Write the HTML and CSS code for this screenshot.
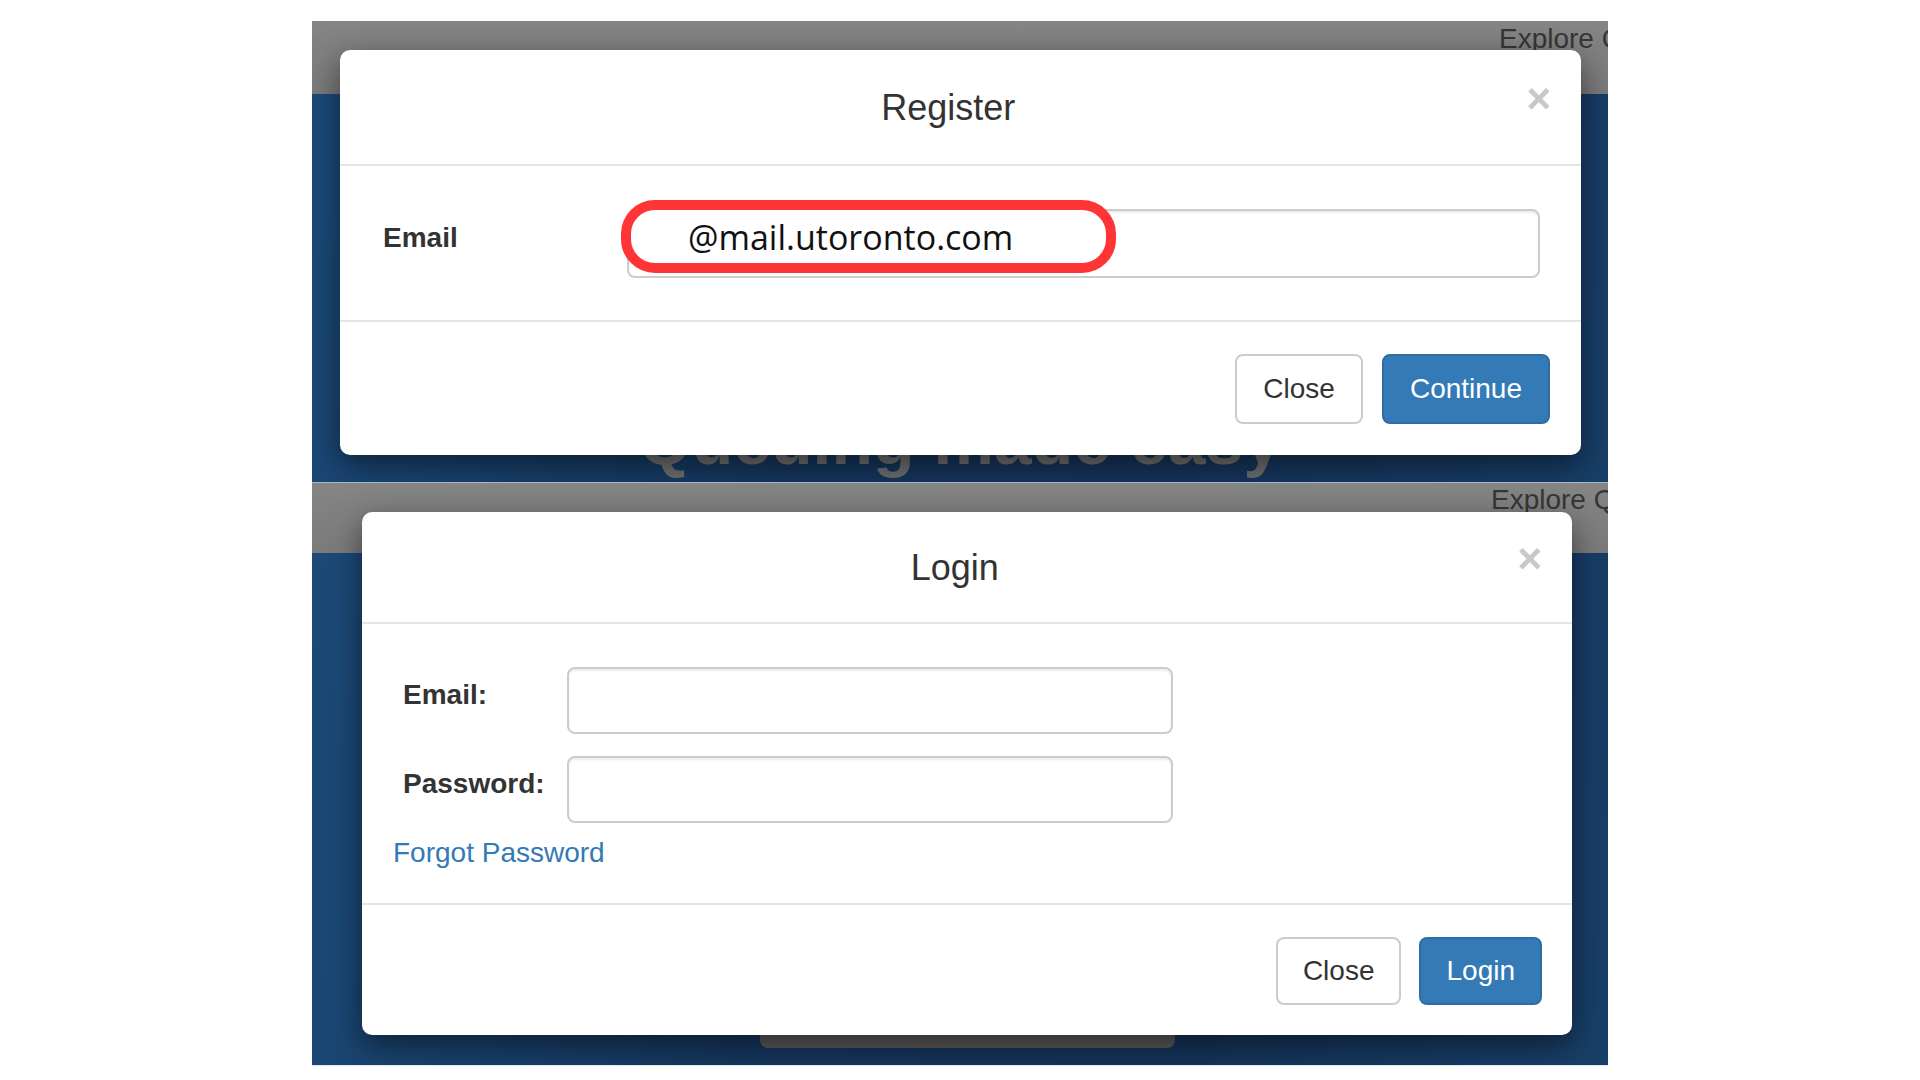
FILE: index.html
```html
<!DOCTYPE html>
<html lang="en">
<head>
<meta charset="utf-8">
<title>Register / Login</title>
<link rel="stylesheet" href="styles.css">
</head>
<body>
<div class="canvas">
  <section class="shot shot-register">
    <div class="nav"><span class="nav-link">Explore Queues</span></div>
    <div class="hero"><h1 class="hero-title">Queuing made easy</h1></div>
    <div class="modal modal-register">
      <div class="modal-header">
        <button class="close" type="button">&times;</button>
        <h4 class="modal-title">Register</h4>
      </div>
      <div class="modal-body">
        <div class="form-row">
          <label class="control-label">Email</label>
          <div class="form-control">
            <div class="annot">@mail.utoronto.com</div>
          </div>
        </div>
      </div>
      <div class="modal-footer">
        <button class="btn btn-default" type="button">Close</button>
        <button class="btn btn-primary" type="button">Continue</button>
      </div>
    </div>
  </section>
  <section class="shot shot-login">
    <div class="nav"><span class="nav-link">Explore Queues</span></div>
    <div class="hero"><div class="hero-button"></div></div>
    <div class="modal modal-login">
      <div class="modal-header">
        <button class="close" type="button">&times;</button>
        <h4 class="modal-title">Login</h4>
      </div>
      <div class="modal-body">
        <div class="form-row">
          <label class="control-label">Email:</label>
          <div class="form-control"></div>
        </div>
        <div class="form-row">
          <label class="control-label">Password:</label>
          <div class="form-control"></div>
        </div>
        <a class="forgot" href="#">Forgot Password</a>
      </div>
      <div class="modal-footer">
        <button class="btn btn-default" type="button">Close</button>
        <button class="btn btn-primary" type="button">Login</button>
      </div>
    </div>
  </section>
</div>
</body>
</html>
```
FILE: styles.css
```css
* { box-sizing: border-box; }

html, body {
  margin: 0;
  padding: 0;
  background: #ffffff;
  font-family: "Liberation Sans", Arial, Helvetica, sans-serif;
}

.canvas {
  width: 1296px;
  margin-left: 312px;
  padding-top: 21px;
}

.shot {
  position: relative;
  overflow: hidden;
  background: #17406b;
}

.shot-register {
  height: 461px;
}

.shot-login {
  height: 584px;
  border-top: 1px solid #a9b8c9;
  border-bottom: 1px solid #dfe6ee;
}

.nav {
  background: linear-gradient(to bottom, #858585, #7a7a7a);
  white-space: nowrap;
  overflow: hidden;
}

.shot-register .nav {
  height: 73px;
  padding: 4px 0 0 1187px;
}

.shot-login .nav {
  height: 70px;
  padding: 3px 0 0 1179px;
}

.nav-link {
  font-size: 28px;
  line-height: 28px;
  color: #363636;
}

.hero {
  background: linear-gradient(100deg, #1b4a78 0%, #15355c 40%, #15345a 70%, #183f69 100%);
}

.shot-register .hero {
  height: 388px;
  padding-top: 312px;
}

.hero-title {
  margin: 0;
  text-align: center;
  font-size: 68px;
  line-height: 68px;
  font-weight: 700;
  color: #6e6e6e;
  white-space: nowrap;
}

.shot-login .hero {
  height: 512px;
  display: flex;
  flex-direction: column;
  justify-content: flex-end;
  align-items: center;
  padding-bottom: 17px;
}

.hero-button {
  width: 415px;
  height: 48px;
  margin-left: 15px;
  background: #5a5a5a;
  border-radius: 8px;
}

/* modals (overlay the page screenshots) */
.modal {
  position: absolute;
  top: 29px;
  background: #ffffff;
  border-radius: 10px;
  box-shadow: 0 10px 30px rgba(0, 0, 0, 0.5);
}

.modal-register {
  left: 28px;
  width: 1241px;
}

.modal-login {
  left: 50px;
  width: 1210px;
}

.modal-header {
  padding: 32px 30px 31px;
  border-bottom: 2px solid #e5e5e5;
}

.modal-login .modal-header {
  padding: 30px 30px 29px;
}

.close {
  float: right;
  margin-top: -4px;
  padding: 0;
  border: 0;
  background: none;
  font-family: "Liberation Sans", Arial, sans-serif;
  font-size: 42px;
  font-weight: 700;
  line-height: 1;
  color: #c8c8c8;
  cursor: pointer;
}

.modal-title {
  margin: 0;
  text-align: center;
  font-size: 36px;
  line-height: 51px;
  font-weight: 400;
  color: #333333;
}

.modal-body {
  padding: 43px 41px 42px 43px;
}

.modal-login .modal-body {
  padding: 43px 41px 30px 41px;
}

.form-row {
  display: flex;
  align-items: flex-start;
}

.modal-login .form-row + .form-row {
  margin-top: 22px;
}

.control-label {
  flex: none;
  width: 244px;
  padding-top: 9px;
  font-size: 28px;
  line-height: 40px;
  font-weight: 700;
  color: #333333;
}

.modal-login .control-label {
  width: 164px;
  padding-top: 8px;
}

.form-control {
  position: relative;
  flex: 1;
  height: 69px;
  border: 2px solid #cccccc;
  border-radius: 8px;
  background: #ffffff;
  box-shadow: inset 0 2px 2px rgba(0, 0, 0, 0.075);
}

.modal-login .form-control {
  flex: none;
  width: 606px;
  height: 67px;
}

/* red annotation ring drawn over the input */
.annot {
  position: absolute;
  left: -8px;
  top: -11px;
  width: 495px;
  height: 73px;
  padding: 1px 0 0 57px;
  border: 10px solid #ff3535;
  border-radius: 34px;
  background: #ffffff;
  font-family: "Open Sans", "Noto Sans", sans-serif;
  font-size: 34px;
  line-height: 53px;
  color: #111111;
  white-space: nowrap;
}

.forgot {
  display: block;
  width: max-content;
  margin: 10px 0 0 -10px;
  font-size: 28px;
  line-height: 40px;
  color: #337ab7;
  text-decoration: none;
}

.modal-footer {
  display: flex;
  justify-content: flex-end;
  gap: 19px;
  padding: 32px 31px 31px;
  border-top: 2px solid #e5e5e5;
}

.modal-login .modal-footer {
  gap: 18px;
  padding: 32px 30px 30px;
}

.btn {
  display: flex;
  align-items: center;
  justify-content: center;
  height: 70px;
  padding: 0 26px;
  border: 2px solid;
  border-radius: 8px;
  font-family: "Liberation Sans", Arial, sans-serif;
  font-size: 28px;
  font-weight: 400;
  cursor: pointer;
}

.modal-login .btn {
  height: 68px;
  padding: 0 25px;
}

.btn-default {
  background: #ffffff;
  border-color: #cccccc;
  color: #333333;
}

.btn-primary {
  background: #337ab7;
  border-color: #2e6da4;
  color: #ffffff;
}
```
